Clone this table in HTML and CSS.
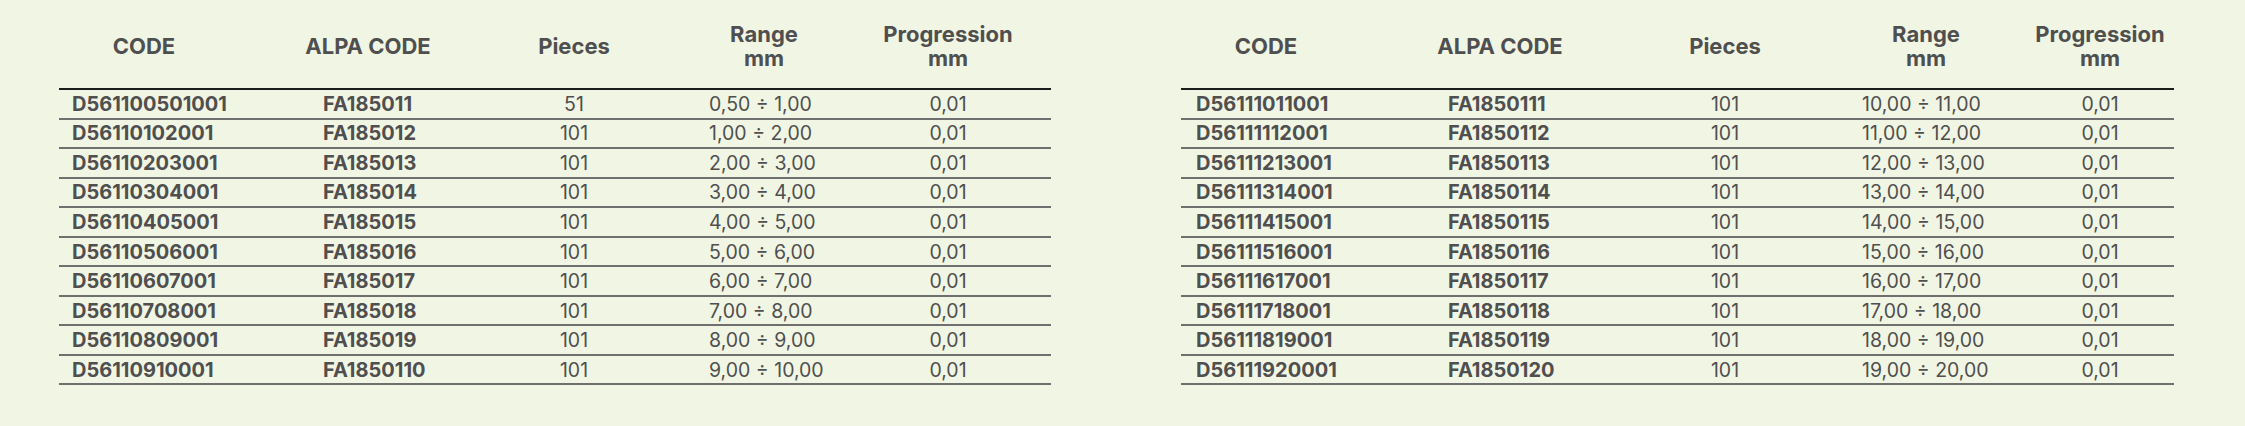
FILE: index.html
```html
<!DOCTYPE html>
<html lang="en">
<head>
<meta charset="utf-8">
<title>Spec tables</title>
<link rel="stylesheet" href="styles.css">
</head>
<body>
<div class="page">
  <table class="spec spec-a">
    <colgroup><col class="c-code"><col class="c-alpa"><col class="c-pcs"><col class="c-range"><col class="c-prog"></colgroup>
    <thead>
      <tr><th>CODE</th><th>ALPA CODE</th><th>Pieces</th><th>Range<br>mm</th><th>Progression<br>mm</th></tr>
    </thead>
    <tbody>
      <tr><td>D561100501001</td><td>FA185011</td><td>51</td><td>0,50 ÷ 1,00</td><td>0,01</td></tr>
      <tr><td>D56110102001</td><td>FA185012</td><td>101</td><td>1,00 ÷ 2,00</td><td>0,01</td></tr>
      <tr><td>D56110203001</td><td>FA185013</td><td>101</td><td>2,00 ÷ 3,00</td><td>0,01</td></tr>
      <tr><td>D56110304001</td><td>FA185014</td><td>101</td><td>3,00 ÷ 4,00</td><td>0,01</td></tr>
      <tr><td>D56110405001</td><td>FA185015</td><td>101</td><td>4,00 ÷ 5,00</td><td>0,01</td></tr>
      <tr><td>D56110506001</td><td>FA185016</td><td>101</td><td>5,00 ÷ 6,00</td><td>0,01</td></tr>
      <tr><td>D56110607001</td><td>FA185017</td><td>101</td><td>6,00 ÷ 7,00</td><td>0,01</td></tr>
      <tr><td>D56110708001</td><td>FA185018</td><td>101</td><td>7,00 ÷ 8,00</td><td>0,01</td></tr>
      <tr><td>D56110809001</td><td>FA185019</td><td>101</td><td>8,00 ÷ 9,00</td><td>0,01</td></tr>
      <tr><td>D56110910001</td><td>FA1850110</td><td>101</td><td>9,00 ÷ 10,00</td><td>0,01</td></tr>
    </tbody>
  </table>
  <table class="spec spec-b">
    <colgroup><col class="c-code"><col class="c-alpa"><col class="c-pcs"><col class="c-range"><col class="c-prog"></colgroup>
    <thead>
      <tr><th>CODE</th><th>ALPA CODE</th><th>Pieces</th><th>Range<br>mm</th><th>Progression<br>mm</th></tr>
    </thead>
    <tbody>
      <tr><td>D56111011001</td><td>FA1850111</td><td>101</td><td>10,00 ÷ 11,00</td><td>0,01</td></tr>
      <tr><td>D56111112001</td><td>FA1850112</td><td>101</td><td>11,00 ÷ 12,00</td><td>0,01</td></tr>
      <tr><td>D56111213001</td><td>FA1850113</td><td>101</td><td>12,00 ÷ 13,00</td><td>0,01</td></tr>
      <tr><td>D56111314001</td><td>FA1850114</td><td>101</td><td>13,00 ÷ 14,00</td><td>0,01</td></tr>
      <tr><td>D56111415001</td><td>FA1850115</td><td>101</td><td>14,00 ÷ 15,00</td><td>0,01</td></tr>
      <tr><td>D56111516001</td><td>FA1850116</td><td>101</td><td>15,00 ÷ 16,00</td><td>0,01</td></tr>
      <tr><td>D56111617001</td><td>FA1850117</td><td>101</td><td>16,00 ÷ 17,00</td><td>0,01</td></tr>
      <tr><td>D56111718001</td><td>FA1850118</td><td>101</td><td>17,00 ÷ 18,00</td><td>0,01</td></tr>
      <tr><td>D56111819001</td><td>FA1850119</td><td>101</td><td>18,00 ÷ 19,00</td><td>0,01</td></tr>
      <tr><td>D56111920001</td><td>FA1850120</td><td>101</td><td>19,00 ÷ 20,00</td><td>0,01</td></tr>
    </tbody>
  </table>
</div>
</body>
</html>
```
FILE: styles.css
```css
html, body {
  margin: 0;
  padding: 0;
  background: #f1f5e4;
}

.page {
  display: flex;
  gap: 130px;
  padding: 4px 0 0 59px;
  font-family: Inter, "Liberation Sans", sans-serif;
  color: #4f4f4f;
}

.spec {
  border-collapse: separate;
  border-spacing: 0;
  table-layout: fixed;
  width: 992px;
  flex: none;
}

.spec th {
  height: 84px;
  padding: 0;
  font-size: 22px;
  font-weight: 700;
  line-height: 24px;
  text-align: center;
  vertical-align: middle;
  white-space: nowrap;
  border-bottom: 2px solid #1c1c1c;
}

.spec td {
  height: 27.55px;
  padding: 0;
  font-size: 19.5px;
  font-weight: 400;
  line-height: 26px;
  text-align: center;
  vertical-align: middle;
  border-bottom: 2px solid #6f6f6f;
  white-space: nowrap;
}

.spec td:nth-child(1),
.spec td:nth-child(2) {
  font-size: 20px;
  font-weight: 700;
  text-align: left;
}

.spec td:nth-child(4) {
  text-align: left;
}

/* left table columns */
.spec-a .c-code { width: 170px; }
.spec-a .c-alpa { width: 278px; }
.spec-a .c-pcs { width: 134px; }
.spec-a .c-range { width: 218px; }
.spec-a .c-prog { width: 192px; }
.spec-a td:nth-child(1) { padding-left: 13px; }
.spec-a td:nth-child(2) { padding-left: 94px; }
.spec-a th:nth-child(4) { padding-left: 28px; }
.spec-a td:nth-child(4) { padding-left: 68px; }
.spec-a th:nth-child(5),
.spec-a td:nth-child(5) { padding-right: 14px; }

/* right table columns */
.spec-b .c-code { width: 170px; }
.spec-b .c-alpa { width: 298px; }
.spec-b .c-pcs { width: 152px; }
.spec-b .c-range { width: 215px; }
.spec-b .c-prog { width: 158px; }
.spec-b td:nth-child(1) { padding-left: 15px; }
.spec-b td:nth-child(2) { padding-left: 97px; }
.spec-b th:nth-child(4) { padding-left: 35px; }
.spec-b td:nth-child(4) { padding-left: 61px; }
.spec-b th:nth-child(5),
.spec-b td:nth-child(5) { padding-left: 10px; }
```
